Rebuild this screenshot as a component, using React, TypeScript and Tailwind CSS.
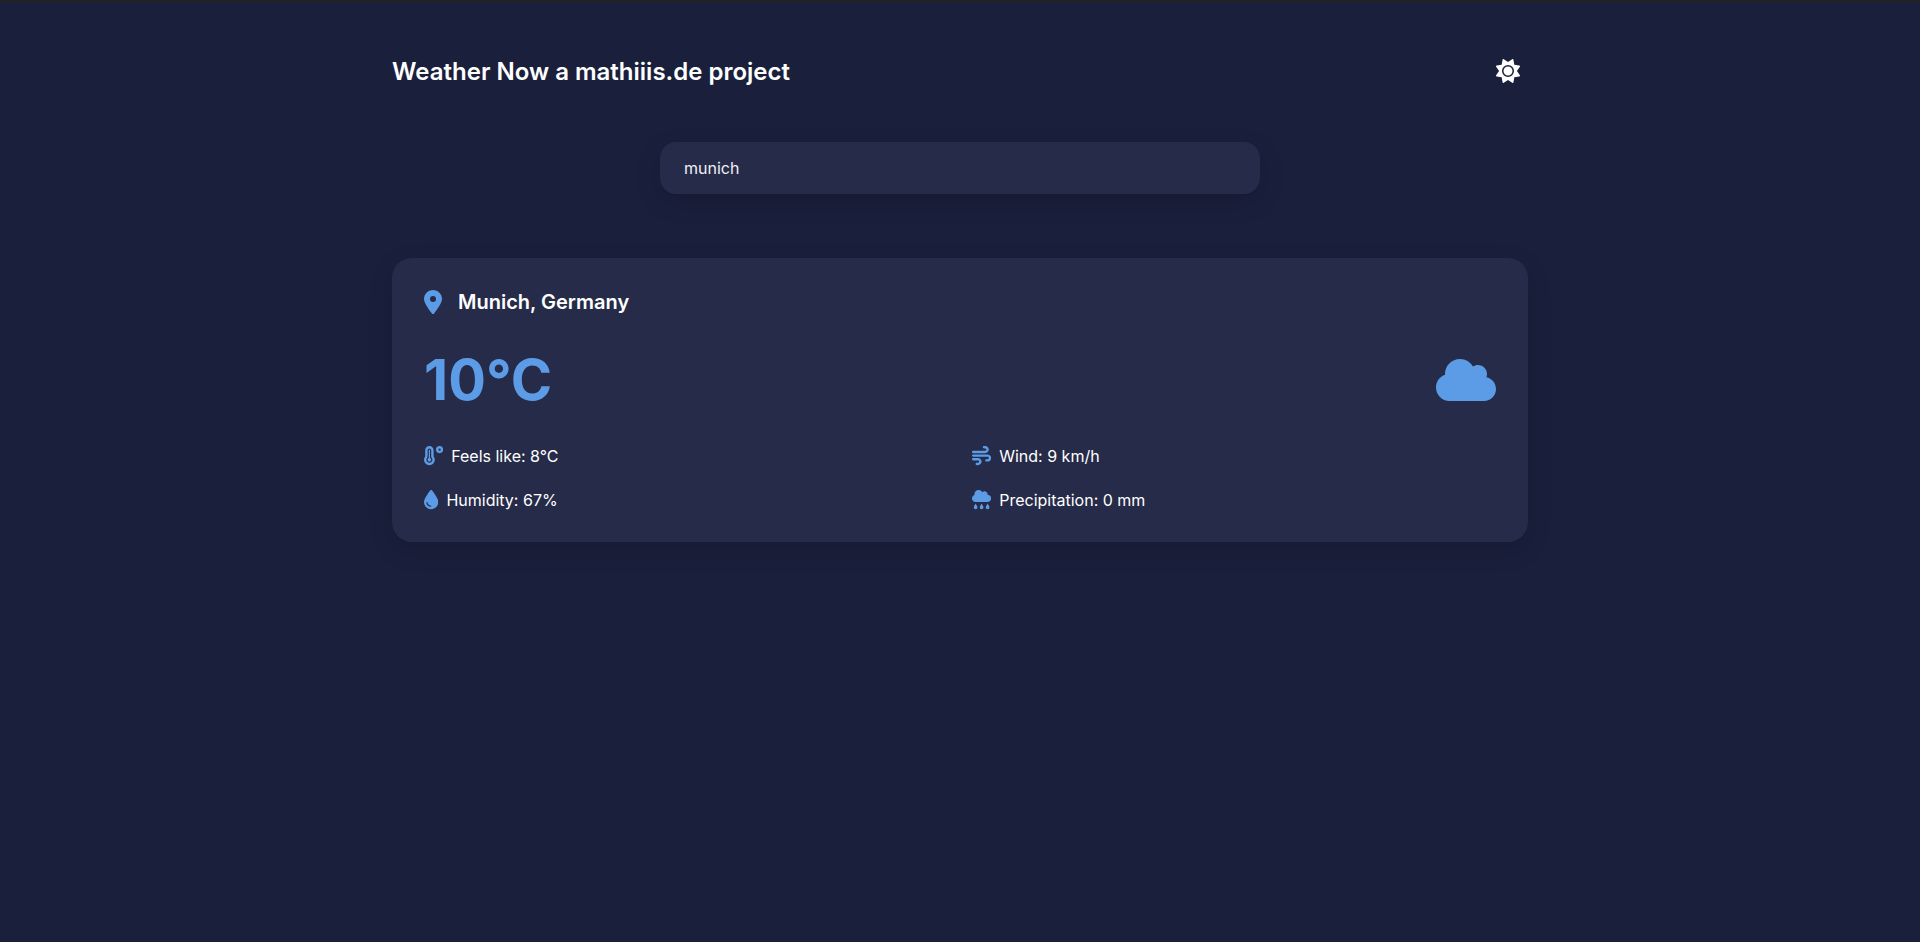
import { FaSun, FaLocationDot, FaCloud, FaDroplet, FaWind, FaCloudRain, FaTemperatureHigh } from "react-icons/fa6";
import type { ReactNode } from "react";

function Detail({ icon, text }: { icon: ReactNode; text: string }) {
  return (
    <div className="flex h-5 items-center gap-2">
      {icon}
      <span className="leading-5">{text}</span>
    </div>
  );
}

export default function App() {
  return (
    <div className="min-h-screen border-t-2 border-[#222222] bg-[#1a1f3c] font-['Inter',sans-serif] text-white">
      <main className="mx-auto flex w-[1136px] flex-col pt-[46px]">
        <header className="flex h-[46px] items-center justify-between">
          <h1 className="pt-0.5 text-2xl font-semibold">Weather Now a mathiiis.de project</h1>
          <button aria-label="Toggle theme" className="p-2">
            <FaSun className="size-6" />
          </button>
        </header>
        <input
          aria-label="City"
          defaultValue="munich"
          className="mx-auto mt-12 h-[52px] w-[600px] rounded-2xl bg-[#262b49] px-6 text-[#f0f0f5] shadow-[0_8px_24px_rgba(0,0,0,0.15)] outline-none"
        />
        <section className="mt-16 h-[284px] rounded-[20px] bg-[#262b49] p-8 shadow-[0_8px_24px_rgba(0,0,0,0.15)]">
          <h2 className="flex h-6 items-center gap-4 text-xl font-semibold">
            <FaLocationDot className="h-6 w-[18px] text-[#5c9ce6]" />
            Munich, Germany
          </h2>
          <div className="mt-8 flex h-[68px] items-center justify-between text-[#5c9ce6]">
            <span className="text-[56px] leading-[68px] font-bold">10°C</span>
            <FaCloud className="h-12 w-[60px]" />
          </div>
          <div className="mt-8 grid grid-cols-2 gap-6">
            <Detail icon={<FaTemperatureHigh className="size-[19.2px] text-[#5c9ce6]" />} text="Feels like: 8°C" />
            <Detail icon={<FaWind className="size-[19.2px] text-[#5c9ce6]" />} text="Wind: 9 km/h" />
            <Detail icon={<FaDroplet className="h-[19.2px] w-[14.4px] text-[#5c9ce6]" />} text="Humidity: 67%" />
            <Detail icon={<FaCloudRain className="size-[19.2px] text-[#5c9ce6]" />} text="Precipitation: 0 mm" />
          </div>
        </section>
      </main>
    </div>
  );
}
